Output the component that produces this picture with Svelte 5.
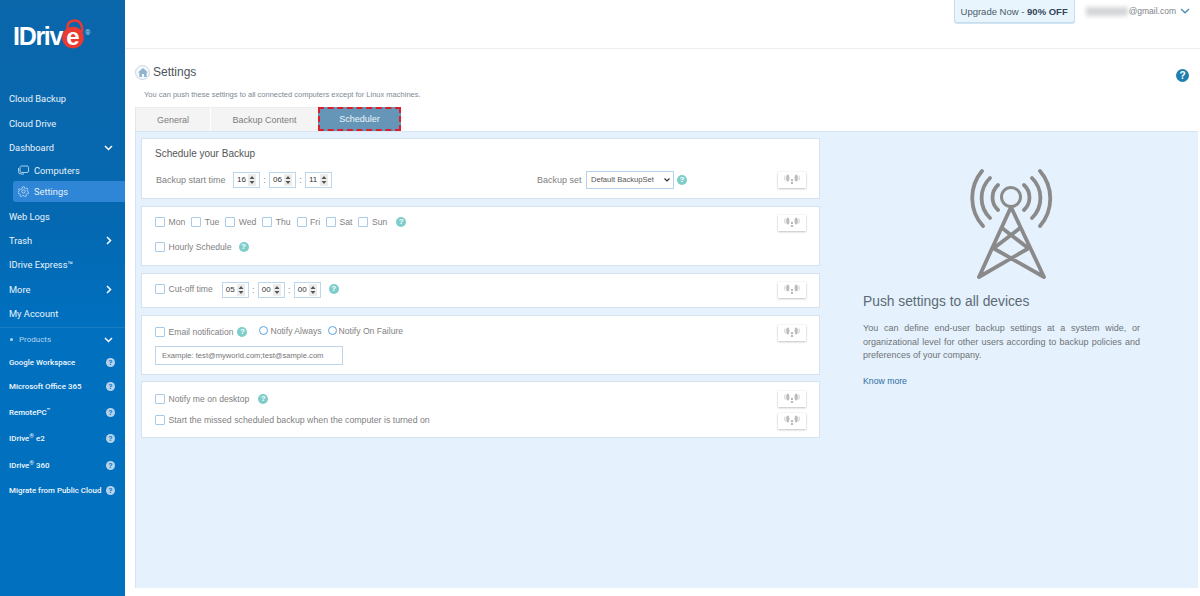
<script>
  const topNav = [
    { label: 'Cloud Backup', cls: 'h25' },
    { label: 'Cloud Drive', cls: 'h24' },
    { label: 'Dashboard', cls: 'h24', chev: 'down' }
  ];
  const midNav = [
    { label: 'Web Logs', cls: 'h24' },
    { label: 'Trash', cls: 'h24', chev: 'right' },
    { label: 'IDrive Express™', cls: 'h25' },
    { label: 'More', cls: 'h24', chev: 'right' },
    { label: 'My Account', cls: 'h25' }
  ];
  const products = [
    { label: 'Google Workspace', h: 'h24' },
    { label: 'Microsoft Office 365', h: 'h25' },
    { label: 'RemotePC', sup: '™', h: 'h26' },
    { label: 'IDrive', sup: '®', after: ' e2', h: 'h27' },
    { label: 'IDrive', sup: '®', after: ' 360', h: 'h26' },
    { label: 'Migrate from Public Cloud', h: 'h24' }
  ];
  const days = ['Mon', 'Tue', 'Wed', 'Thu', 'Fri', 'Sat', 'Sun'];
</script>

{#snippet help()}<span class="help">?</span>{/snippet}

{#snippet push()}
  <button class="push" aria-label="Push to all devices">
    <svg width="16" height="13" viewBox="0 0 16 13" fill="none" stroke="#c4c4c4">
      <ellipse cx="3.800" cy="5" rx="1.600" ry="3.500" fill="#bcbcbc" stroke="none"/>
      <path d="M1.200 2.500Q.2 5 1.200 7.500M14.800 2.500Q15.800 5 14.800 7.500" stroke-width=".8"/>
      <ellipse cx="12.200" cy="5" rx="1.600" ry="3.500" fill="#bcbcbc" stroke="none"/>
      <path d="M8 6v6" stroke-width="1.400" stroke-dasharray="2 1" stroke="#9a9a9a"/>
    </svg>
  </button>
{/snippet}

{#snippet num(v)}
  <span class="num">{v}
    <svg width="8" height="12" viewBox="0 0 8 12"><rect width="8" height="12" fill="#ececec"/><path d="M4 2 6.500 5h-5zM4 10 1.500 7h5z" fill="#555"/></svg>
  </span>
{/snippet}

{#snippet time(a, b, c)}
  <span class="time">
    {@render num(a)}
    <i>:</i>
    {@render num(b)}
    <i>:</i>
    {@render num(c)}
  </span>
{/snippet}

<div class="page">
  <aside class="side">
    <div class="logo">
      <span class="logo-word">IDriv</span>
      <span class="logo-e">
        <svg width="23" height="30" viewBox="0 0 23 30" fill="none">
          <path d="M5.500 11C5 4 8 1.500 12.500 1.500S21 5 20 13" stroke="#ea3a32" stroke-width="2.500"/>
          <circle cx="11" cy="18.500" r="10.800" fill="#ea3a32"/>
        </svg>
        <b>e</b>
      </span>
      <span class="logo-r">®</span>
    </div>
    <nav>
      {#each topNav as n}
        <div class="nav {n.cls}">{n.label}
          {#if n.chev}<svg class="chev" width="9" height="6" viewBox="0 0 9 6" fill="none" stroke="#fff" stroke-width="1.500"><path d="M1 1l3.500 3.500L8 1"/></svg>{/if}
        </div>
      {/each}
      <div class="sub">
        <svg width="11" height="10" viewBox="0 0 11 10" fill="none" stroke="#a9cfee" stroke-width="1"><rect x="2" y="1" width="8.500" height="6.500" rx="1.500"/><path d="M.5 3v3.500Q.5 9 3 9h3"/></svg>
        Computers
      </div>
      <div class="sub active">
        <svg width="11" height="11" viewBox="0 0 12 12" fill="none" stroke="#b9d9f4" stroke-width="1"><circle cx="6" cy="6" r="1.800"/><path d="M5 .8h2l.3 1.500 1.300.6 1.300-.8 1.200 1.400-.9 1.200.3 1.300 1.300.7-.4 1.800-1.500.1-.9 1.100.3 1.500-1.800.8-1-1.200H4.800l-1 1.200-1.800-.8.3-1.500-.9-1.100-1.500-.1-.4-1.800 1.300-.7.300-1.300-.9-1.200L1.400 3.100l1.300.8L4 3.300z" transform="translate(.3 .2) scale(.95)"/></svg>
        Settings
      </div>
      <div class="gap2"></div>
      {#each midNav as n}
        <div class="nav {n.cls}">{n.label}
          {#if n.chev}<svg class="chev r" width="6" height="9" viewBox="0 0 6 9" fill="none" stroke="#fff" stroke-width="1.500"><path d="M1 1l3.500 3.500L1 8"/></svg>{/if}
        </div>
      {/each}
      <div class="prod-head"><span class="dot"></span>Products
        <svg class="chev" width="9" height="6" viewBox="0 0 9 6" fill="none" stroke="#fff" stroke-width="1.500"><path d="M1 1l3.500 3.500L8 1"/></svg>
      </div>
      {#each products as p}
        <div class="prod {p.h}">
          <span>{p.label}{#if p.sup}<sup>{p.sup}</sup>{/if}{p.after ?? ''}</span>
          <span class="phelp">?</span>
        </div>
      {/each}
    </nav>
  </aside>

  <main class="main">
    <header class="top">
      <button class="upgrade">Upgrade Now - <b>90% OFF</b></button>
      <span class="mail"><span class="blur"></span>@gmail.com</span>
      <svg class="mchev" width="10" height="6" viewBox="0 0 10 6" fill="none" stroke="#4f8fb5" stroke-width="1.400"><path d="M1 1l4 3.800L9 1"/></svg>
    </header>

    <div class="title-row">
      <span class="home">
        <svg width="10" height="9" viewBox="0 0 10 9" fill="#8fb3cc"><path d="M5 0 0 4.500h1.400V9h2.500V6h2.200v3h2.500V4.500H10z"/></svg>
      </span>
      <h1>Settings</h1>
      <span class="qmark">?</span>
    </div>
    <p class="note">You can push these settings to all connected computers except for Linux machines.</p>

    <div class="tabs">
      <div class="tab general">General</div>
      <div class="tab content">Backup Content</div>
      <div class="tab sched">Scheduler</div>
    </div>

    <section class="panel">
      <div class="cards">
        <div class="card c1">
          <h2>Schedule your Backup</h2>
          <div class="row">
            <label class="lbl bst" for="bs">Backup start time</label>
            {@render time('16', '06', '11')}
            <label class="lbl bset" for="bs">Backup set</label>
            <span class="sel">
              <select id="bs"><option>Default BackupSet</option></select>
              <svg width="6" height="4" viewBox="0 0 6 4" fill="none" stroke="#333" stroke-width="1.200"><path d="M.5 .5 3 3 5.500 .5"/></svg>
            </span>
            {@render help()}
            {@render push()}
          </div>
        </div>

        <div class="card c2">
          <div class="row days">
            {#each days as d}
              <label class="day"><input class="cb" type="checkbox" />{d}</label>
            {/each}
            <span class="dh">{@render help()}</span>
            {@render push()}
          </div>
          <div class="row hourly">
            <label class="day"><input class="cb" type="checkbox" />Hourly Schedule</label>
            <span class="hh">{@render help()}</span>
          </div>
        </div>

        <div class="card c3">
          <div class="row">
            <label class="day cut"><input class="cb" type="checkbox" />Cut-off time</label>
            {@render time('05', '00', '00')}
            <span class="ch">{@render help()}</span>
            {@render push()}
          </div>
        </div>

        <div class="card c4">
          <div class="row">
            <label class="day"><input class="cb" type="checkbox" />Email notification</label>
            <span class="eh">{@render help()}</span>
            <label class="radio first"><span class="rb"></span>Notify Always</label>
            <label class="radio"><span class="rb"></span>Notify On Failure</label>
            {@render push()}
          </div>
          <input class="email" type="text" placeholder="Example: test@myworld.com;test@sample.com" />
        </div>

        <div class="card c5">
          <div class="row">
            <label class="day"><input class="cb" type="checkbox" />Notify me on desktop</label>
            <span class="nh">{@render help()}</span>
            {@render push()}
          </div>
          <div class="row second">
            <label class="day"><input class="cb" type="checkbox" />Start the missed scheduled backup when the computer is turned on</label>
            {@render push()}
          </div>
        </div>
      </div>

      <aside class="info">
        <svg class="tower" width="120" height="140" viewBox="0 0 120 140" fill="none" stroke="#8a8a8a" stroke-width="3.800" stroke-linecap="round">
          <circle cx="71" cy="47" r="9.500" stroke-width="3"/>
          <path d="M71 57 39 127M71 57l33 70M62 78 88 98M80 78 54 98M53 98l51 29M89 98 39 127"/>
          <path d="M58 35A17 17 0 0 0 58 60M84 35A17 17 0 0 1 84 60"/>
          <path d="M50 28A28 28 0 0 0 50 68M92 28A28 28 0 0 1 92 68"/>
          <path d="M42 21A42 42 0 0 0 43 76M100 21A42 42 0 0 1 100 76"/>
        </svg>
        <h3>Push settings to all devices</h3>
        <p>You can define end-user backup settings at a system wide, or organizational level for other users according to backup policies and preferences of your company.</p>
        <a href="#more">Know more</a>
      </aside>
    </section>
  </main>
</div>

<style>
  :global(body) { margin: 0; background: #fff; }
  * { box-sizing: border-box; }
  .page { display: flex; width: 1200px; height: 596px; overflow: hidden; font-family: "Liberation Sans", Arial, sans-serif; }

  .side { width: 125px; flex: none; background: linear-gradient(180deg, #0b66aa 0%, #0568b0 35%, #0070bf 55%, #0070bf 100%); color: #fff; font-family: Roboto, sans-serif; }
  .logo { height: 86px; display: flex; align-items: flex-start; padding: 19px 0 0 13px; }
  .logo-word { font: 700 25px/30px "Liberation Sans", sans-serif; letter-spacing: -1.300px; margin-top: 2px; width: 49px; }
  .logo-e { position: relative; width: 23px; height: 30px; }
  .logo-e svg { display: block; }
  .logo-e b { position: absolute; left: 0; width: 22px; top: 6px; text-align: center; font: 700 24px/24px "Liberation Sans", sans-serif; color: #fff; }
  .logo-r { font-size: 7px; line-height: 10px; color: #a9cfee; margin-top: 9px; margin-left: 0; }

  .nav { display: flex; align-items: center; padding-left: 9px; font-size: 9.300px; color: #eaf4fc; position: relative; }
  .h24 { height: 24px; }
  .h25 { height: 25px; }
  .h26 { height: 26px; }
  .h27 { height: 27px; }
  .chev { position: absolute; left: 104px; top: 50%; margin-top: -2px; }
  .chev.r { left: 106px; margin-top: -4px; }
  .sub { display: flex; align-items: center; gap: 5px; height: 22px; margin-left: 13px; padding-left: 5px; font-size: 9.300px; color: #e3f0fa; }
  .sub.active { height: 21px; background: #2f86d6; border-radius: 3px 0 0 3px; }
  .gap2 { height: 2px; }
  .prod-head { position: relative; display: flex; align-items: center; height: 23px; margin-top: 1px; border-top: 1px solid #1a7bc0; padding-left: 10px; font-size: 8px; color: #b4d6f0; gap: 6px; }
  .dot { width: 3px; height: 3px; border-radius: 50%; background: #b4d6f0; }
  .prod { display: flex; align-items: center; justify-content: space-between; padding: 0 10px 0 9px; font-size: 7.900px; font-weight: 500; color: #f2f8fd; white-space: nowrap; }
  .prod sup { font-size: 6px; line-height: 0; vertical-align: 3px; }
  .phelp { width: 9px; height: 9px; border-radius: 50%; background: #b5d3ea; color: #0070bf; font: 700 7px/9px "Liberation Sans", sans-serif; text-align: center; flex: none; }

  .main { flex: 1; min-width: 0; display: flex; flex-direction: column; }
  .top { height: 49px; flex: none; border-bottom: 1px solid #eceff1; display: flex; align-items: flex-start; justify-content: flex-end; padding-right: 10px; }
  .upgrade { width: 121px; height: 23px; flex: none; padding: 0; border: 1px solid #c5deee; border-top: 0; border-radius: 0 0 3px 3px; background: #e9f5fd; box-shadow: 0 1px 1px #cfe3f1; font: 9.500px "Liberation Sans", sans-serif; color: #4a5a68; margin-right: 11px; }
  .upgrade b { color: #33475a; }
  .mail { display: flex; align-items: center; height: 22px; font-size: 8.500px; color: #7b8388; }
  .blur { width: 42px; height: 9px; background: #d3d6d8; filter: blur(2px); margin-right: 1px; }
  .mchev { margin: 8px 0 0 4px; }

  .title-row { display: flex; align-items: center; height: 20px; margin-top: 13px; padding: 0 10px 0 10px; }
  .home { width: 15px; height: 15px; border-radius: 50%; border: 1px solid #c7d6e2; display: flex; align-items: center; justify-content: center; background: #f4f8fb; margin-right: 3px; }
  h1 { margin: 0; font-size: 12px; font-weight: 400; color: #4d5358; flex: 1; }
  .qmark { width: 13px; height: 13px; border-radius: 50%; background: #1f7fae; color: #fff; font: 700 10px/13px "Liberation Sans", sans-serif; text-align: center; margin: 6px 1px 0 0; }
  .note { margin: 7px 0 0 19px; font-size: 7.500px; line-height: 12px; color: #7d8a94; }

  .tabs { display: flex; margin: 6px 0 0 10px; height: 24px; flex: none; }
  .tab { display: flex; align-items: center; justify-content: center; font-size: 9px; color: #7c7c7c; background: #f4f4f4; }
  .general { width: 75px; border-left: 1px solid #e6e6e6; border-top: 1px solid #ececec; }
  .content { width: 107px; margin-left: 1px; border-top: 1px solid #ececec; }
  .sched { width: 83px; background: #6596b7; color: #eef5fa; border: 2px dashed #d8212c; }

  .panel { height: 457px; flex: none; margin: 0 2px 0 10px; background: #e5f1fd; border: 1px solid #d7e5f2; border-bottom: 0; border-right: 0; display: flex; padding: 6px 0 0 5px; }
  .cards { width: 679px; flex: none; display: flex; flex-direction: column; gap: 7px; }
  .card { background: #fff; border: 1px solid #d6e3ef; padding: 0 13px 0 13px; font-size: 8.600px; color: #7f7f7f; }
  .c1 { height: 61px; padding-top: 8px; }
  .c2 { height: 60px; padding-top: 6px; }
  .c3 { height: 35px; padding-top: 7px; }
  .c4 { height: 60px; padding-top: 7px; }
  .c5 { height: 57px; padding-top: 8px; margin-top: -1px; }
  h2 { margin: 0 0 11px; font-size: 10px; line-height: 13px; font-weight: 400; color: #555; }
  .row { display: flex; align-items: center; height: 17px; }
  .lbl { white-space: nowrap; }
  .bst { margin-left: 1px; width: 77px; flex: none; font-size: 9px; }
  .bset { margin-left: 205px; width: 49px; flex: none; font-size: 9px; }
  .time { display: inline-flex; align-items: center; }
  .time i { width: 9px; text-align: center; font-style: normal; color: #888; }
  .num { display: flex; align-items: center; justify-content: space-between; width: 27px; height: 16px; border: 1px solid #bcd6ee; padding: 0 3px 0 3px; font-size: 8px; color: #333; background: #fff; }
  .sel { position: relative; display: flex; align-items: center; margin-right: 3px; flex: none; }
  .sel svg { position: absolute; right: 4px; top: 7px; pointer-events: none; }
  select { appearance: none; width: 88px; height: 18px; border: 1px solid #b7d2ec; background: #fff; font: 7.600px "Liberation Sans", sans-serif; color: #555; padding: 0 0 0 4px; margin: 0; border-radius: 0; }
  .help { display: inline-block; width: 10px; height: 10px; border-radius: 50%; background: #7fcdca; color: #fff; font: 700 8px/10px "Liberation Sans", sans-serif; text-align: center; flex: none; }
  .push { margin-left: auto; width: 28px; height: 16px; padding: 0; border: 0; background: #fff; box-shadow: 0 1px 2px #c3c3c3, 0 0 1px #ddd; display: flex; align-items: center; justify-content: center; }
  .c2 .push { margin-top: 2px; }
  .c4 .push { margin-top: 2px; }

  .day { display: inline-flex; align-items: center; white-space: nowrap; margin-right: 6px; }
  .cb { appearance: none; width: 10px; height: 10px; margin: 0 3.500px 0 0; border: 1px solid #a7cbe8; border-radius: 1px; background: #fff; flex: none; }
  .dh { margin-left: 3px; display: flex; }
  .hourly { margin-top: 8px; }
  .hh { margin-left: 1px; display: flex; }
  .cut { margin-right: 9px; margin-top: -2px; }
  .ch { margin-left: 8px; display: flex; margin-top: -1px; }
  .eh { margin-left: -2px; display: flex; }
  .radio { display: inline-flex; align-items: center; gap: 2px; margin-top: -2px; margin-right: 6px; white-space: nowrap; }
  .radio.first { margin-left: 12px; }
  .rb { width: 9px; height: 9px; border: 1.300px solid #5da3e0; border-radius: 50%; background: #fff; }
  .email { display: block; width: 188px; height: 19px; margin-top: 6px; border: 1px solid #bcd6ee; padding: 0 6px; font: 7.600px "Liberation Sans", sans-serif; border-radius: 0; }
  .email::placeholder { color: #757575; opacity: 1; }
  .nh { margin-left: 3px; display: flex; }
  .second { margin-top: 5px; }
  .second .day { font-size: 8.750px; margin-top: -1px; }

  .info { position: relative; flex: 1; padding: 0 58px 0 43px; display: flex; flex-direction: column; }
  .tower { position: absolute; left: 120px; top: 12px; }
  h3 { margin: 155px 0 0; font-size: 13.800px; line-height: 18px; font-weight: 400; color: #5c6b73; }
  .info p { margin: 11px 0 0; font-size: 9px; line-height: 13.500px; color: #6f7375; text-align: justify; }
  .info a { margin-top: 13px; font-size: 8.700px; color: #2c6f9e; text-decoration: none; }
</style>
